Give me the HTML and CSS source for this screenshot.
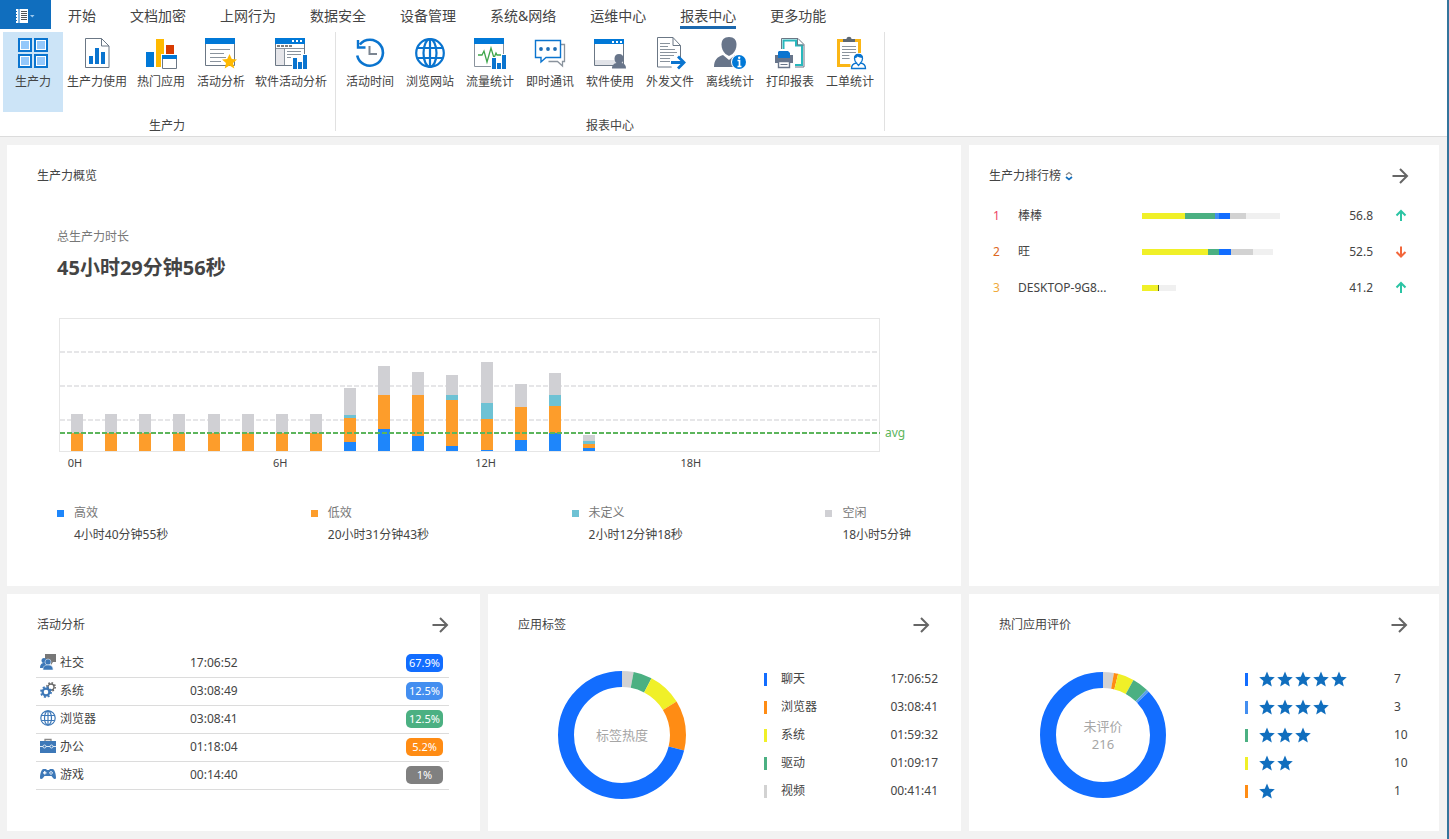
FILE: index.html
```html
<!DOCTYPE html>
<html lang="zh-CN">

<head>
  <meta charset="utf-8">
  <meta name="viewport" content="width=device-width, initial-scale=1">
  <title>报表中心</title>
  <link rel="stylesheet" href="styles.css">
</head>

<body>
  <svg class="sprite" aria-hidden="true">
    <symbol id="i-next" viewBox="0 0 18 18">
      <path d="M1.500 9H16M9 2l7 7-7 7" fill="none" stroke="#666" stroke-width="2" />
    </symbol>
    <symbol id="i-star" viewBox="0 0 16 16">
      <path d="M8 0.500l2.200 5.200 5.600.5-4.300 3.700 1.300 5.600L8 12.600l-4.800 2.900 1.300-5.600L.2 6.200l5.600-.5z" fill="#106ebe" />
    </symbol>
    <symbol id="i-up" viewBox="0 0 16 16">
      <path d="M8 13V3M3.500 7.500 8 3l4.500 4.500" fill="none" stroke="#2bc4a4" stroke-width="2" />
    </symbol>
    <symbol id="i-down" viewBox="0 0 16 16">
      <path d="M8 2.500v10M3.500 8 8 12.500 12.500 8" fill="none" stroke="#f2663b" stroke-width="2" />
    </symbol>
  </svg>

  <header class="ribbon">
    <div class="tab-row">
      <button class="file-button" aria-label="文件">
        <svg width="20" height="14" viewBox="0 0 20 14">
          <path d="M1 0h2.500v14H1zM4.500 0H13v14H4.500z" fill="#fff" />
          <path d="M0 2.500h2M0 5.500h2M0 8.500h2M0 11.500h2" stroke="#106ebe" />
          <path d="M6 2.500h6M6 4.500h6M6 6.500h6M6 8.500h6M6 10.500h6" stroke="#555" />
          <path d="M15 6h4.500l-2.250 2.500z" fill="#9cc8ee" />
        </svg>
      </button>
      <nav class="tabs">
        <a href="#">开始</a>
        <a href="#">文档加密</a>
        <a href="#">上网行为</a>
        <a href="#">数据安全</a>
        <a href="#">设备管理</a>
        <a href="#">系统&amp;网络</a>
        <a href="#">运维中心</a>
        <a href="#" class="active">报表中心</a>
        <a href="#">更多功能</a>
      </nav>
    </div>

    <div class="tool-row">
      <section class="tool-group">
        <div class="tools">
          <button class="tool selected">
            <svg viewBox="0 0 32 32">
              <g fill="#fff" stroke="#0a74cf" stroke-width="2">
                <path d="M2 2h12v12H2zM18 2h12v12H18zM2 18h12v12H2zM18 18h12v12H18z" />
              </g>
              <path d="M4 4h8v8H4zM20 4h8v8h-8zM4 20h8v8H4zM20 20h8v8h-8z" fill="#94c8fb" />
            </svg>
            <span>生产力</span>
          </button>
          <button class="tool">
            <svg viewBox="0 0 32 32">
              <path d="M4.500 1.500h16l7.500 7.500v21.500H4.500z" fill="#fff" stroke="#6b7785" />
              <path d="M20.500 1.500V9H28" fill="none" stroke="#6b7785" />
              <path d="M8 19h4v8H8zM14 11h4v16h-4zM20 15h4v12h-4z" fill="#0a74cf" />
            </svg>
            <span>生产力使用</span>
          </button>
          <button class="tool">
            <svg viewBox="0 0 32 32">
              <path d="M1 15h8v15H1z" fill="#0078d7" />
              <path d="M11 2h8v28h-8z" fill="#ffb900" />
              <path d="M21 8h8v9h-8z" fill="#d83b01" />
              <path d="M16 17h17v16H16z" fill="#fff" />
              <path d="M17.500 18.500h14v13h-14z" fill="#fff" stroke="#6b7785" />
              <path d="M17 18h15v4H17z" fill="#0078d7" />
            </svg>
            <span>热门应用</span>
          </button>
          <button class="tool">
            <svg viewBox="0 0 32 32">
              <path d="M.5 1.500h29v27H.5z" fill="#fff" stroke="#6b7785" />
              <path d="M0 1h30v6H0z" fill="#0078d7" />
              <path d="M5 12.500h20M5 16.500h14M5 20.500h16M5 24.500h11" stroke="#8a939d" />
              <path d="M24.500 17l2.300 5 5.200.5-4 3.600 1.300 5.500-4.800-3-4.800 3 1.300-5.500-4-3.600 5.200-.5z" fill="#ffb900" />
            </svg>
            <span>活动分析</span>
          </button>
          <button class="tool">
            <svg viewBox="0 0 32 32">
              <path d="M.5 1.500h29v27H.5z" fill="#fff" stroke="#6b7785" />
              <path d="M0 1h30v6H0z" fill="#0078d7" />
              <path d="M17 3h2v2h-2zM21 3h2v2h-2zM25 3h2v2h-2z" fill="#fff" />
              <path d="M2 9h16" stroke="#555" stroke-width="1.500" stroke-dasharray="3 1" />
              <path d="M1 12h8v16H1z" fill="#e6e6ea" />
              <path d="M9.500 11v17M1 11.500h28" stroke="#8a939d" />
              <path d="M12 14.500h14M12 17.500h14M12 20.500h4" stroke="#8a939d" />
              <path d="M17 19h6v4h4v-6h6v15H17z" fill="#fff" />
              <path d="M18 21h4v11h-4zM23 25h4v7h-4zM28 18h4v14h-4z" fill="#0a74cf" />
            </svg>
            <span>软件活动分析</span>
          </button>
        </div>
        <h2 class="group-name">生产力</h2>
      </section>

      <section class="tool-group">
        <div class="tools">
          <button class="tool">
            <svg viewBox="0 0 32 32">
              <path d="M5.800 7.500A13 13 0 1 1 3.200 18.500" fill="none" stroke="#0a74cf" stroke-width="2.600" />
              <path d="M4 3v7.500h7.500" fill="none" stroke="#0a74cf" stroke-width="2.400" />
              <path d="M15.500 9v8H23" fill="none" stroke="#7b8591" stroke-width="2" />
            </svg>
            <span>活动时间</span>
          </button>
          <button class="tool">
            <svg viewBox="0 0 32 32">
              <g fill="none" stroke="#0a74cf" stroke-width="2.200">
                <circle cx="16" cy="16" r="13.800" />
                <ellipse cx="16" cy="16" rx="6.500" ry="13.800" />
                <path d="M16 2v28M3.500 11h25M3.500 21h25" />
              </g>
            </svg>
            <span>浏览网站</span>
          </button>
          <button class="tool">
            <svg viewBox="0 0 32 32">
              <path d="M.5 1.500h29v28H.5z" fill="#fff" stroke="#8a939d" />
              <path d="M0 1h30v6H0z" fill="#0078d7" />
              <path d="M4 18h4l2-4 3 11 4-14 3 10 2-5 1 2h4" fill="none" stroke="#3fa64b" stroke-width="1.300" />
              <path d="M17 20h6v5h4v-8h6v15H17z" fill="#fff" />
              <path d="M18 21h4v11h-4zM23 26h4v6h-4zM28 18h4v14h-4z" fill="#0a74cf" />
            </svg>
            <span>流量统计</span>
          </button>
          <button class="tool">
            <svg viewBox="0 0 32 32">
              <path d="M27 7.500h3.500v17h-2v4.500l-5-4.500h-9" fill="none" stroke="#8a939d" stroke-width="1.300" />
              <path d="M1.500 3.500h25v17H12l-5 4.500v-4.500H1.500z" fill="#fff" stroke="#0a74cf" stroke-width="1.400" />
              <g fill="#1d6db5">
                <circle cx="7" cy="12" r="1.900" />
                <circle cx="14" cy="12" r="1.900" />
                <circle cx="21" cy="12" r="1.900" />
              </g>
            </svg>
            <span>即时通讯</span>
          </button>
          <button class="tool">
            <svg viewBox="0 0 32 32">
              <path d="M.5 2.500h29v26H.5z" fill="#fff" stroke="#6b7785" />
              <path d="M1 23h28v5H1z" fill="#e1e3e8" />
              <path d="M0 2h30v5H0z" fill="#0078d7" />
              <path d="M18 4h2v2h-2zM22 4h2v2h-2zM26 4h2v2h-2z" fill="#fff" />
              <path d="M25 17c3 0 4.500 2 4.500 4.500 0 2-.8 3.500-2 4.500 3 .6 4.500 2 4.500 5.500H18c0-3.500 2-4.900 4.500-5.500-1.200-1-2-2.500-2-4.500 0-2.500 1.500-4.500 4.500-4.500z" fill="#68758a" />
            </svg>
            <span>软件使用</span>
          </button>
          <button class="tool">
            <svg viewBox="0 0 32 32">
              <path d="M3.500.5H19l7.500 8v21.500h-23z" fill="#fff" stroke="#6b7785" />
              <path d="M19 .5v8h7.500" fill="none" stroke="#6b7785" />
              <path d="M6 6.500h10M6 9.500h8M6 12.500h15M6 15.500h17M6 18.500h14M6 21.500h11M6 24.500h10" stroke="#8a939d" />
              <path d="M16 21h16v11H18z" fill="#fff" />
              <path d="M17 25.500h12M24 19.500l6 6-6 6" fill="none" stroke="#0a74cf" stroke-width="2.800" />
            </svg>
            <span>外发文件</span>
          </button>
          <button class="tool">
            <svg viewBox="0 0 32 32">
              <path d="M15 0c5 0 7.500 3 7.500 7.500 0 4-1.500 7-4 9.500L15 19l-3.500-2C9 14.500 7.500 11.500 7.500 7.500 7.500 3 10 0 15 0z" fill="#68758a" />
              <path d="M0 30c0-7 3-10 9-12l6 5 6-5c3 1 5 2 6.500 4l-7 8z" fill="#68758a" />
              <circle cx="25" cy="25" r="8" fill="#fff" />
              <circle cx="25" cy="25" r="7" fill="#0078d7" />
              <path d="M23.500 23.500H25.500V29M23.500 29.500h4" fill="none" stroke="#fff" stroke-width="1.700" />
              <circle cx="25.200" cy="20.800" r="1.200" fill="#fff" />
            </svg>
            <span>离线统计</span>
          </button>
          <button class="tool">
            <svg viewBox="0 0 32 32">
              <path d="M7.500 1.500H24l6 6v22.500H7.500z" fill="#fff" stroke="#6b7785" />
              <path d="M9.500 3.500H22v5h6v19.500H9.500z" fill="none" stroke="#28b8bd" stroke-width="2" />
              <path d="M23.500 1.500V8H30" fill="none" stroke="#6b7785" />
              <path d="M0 12h21v20H0z" fill="#fff" />
              <path d="M5 14h9l2 2v5H4v-6z" fill="#0a74cf" />
              <path d="M1 18h3v3h12v-3h3v8H1z" fill="#68758a" />
              <path d="M4.500 24.500h11v6h-11z" fill="#fff" stroke="#68758a" stroke-width="1.400" />
              <path d="M6.500 27.500h7" stroke="#68758a" />
            </svg>
            <span>打印报表</span>
          </button>
          <button class="tool">
            <svg viewBox="0 0 32 32">
              <path d="M4.500 3.500h21v25h-21z" fill="#fff" stroke="#fbb615" stroke-width="3" />
              <path d="M9 5V2h3.500c0-3 5-3 5 0H21v3z" fill="#5e6873" />
              <path d="M8 9.500h14M8 12.500h14M8 15.500h14M8 18.500h11M8 21.500h8" stroke="#8a939d" />
              <path d="M15 16h17v17H17z" fill="#fff" />
              <path d="M24.500 17.500c2.500 0 4 1.500 4 4 0 2-1 3.500-2 4.500 3 .5 5 1.500 5 5.500h-14c0-4 2-5 5-5.500-1-1-2-2.500-2-4.500 0-2.500 1.500-4 4-4zM22.500 26l2 2.500 2-2.500" fill="#fff" stroke="#0a74cf" stroke-width="1.300" />
              <path d="M20.500 21c0-2.500 1.500-4 4-4s4 1.500 4 4c-2 0-4-1-5-1.500-.5 1-1.500 1.500-3 1.500z" fill="#0a74cf" />
            </svg>
            <span>工单统计</span>
          </button>
        </div>
        <h2 class="group-name">报表中心</h2>
      </section>
    </div>
  </header>

  <main class="dashboard">
    <!-- 生产力概览 -->
    <section class="panel overview">
      <div class="panel-head">
        <h3>生产力概览</h3>
      </div>
      <div class="overview-body">
        <p class="total-label">总生产力时长</p>
        <p class="total-value">45小时29分钟56秒</p>

        <div class="chart">
          <div class="plot" id="plot"></div>
          <div class="avg-line"><span>avg</span></div>
        </div>
        <div class="axis">
          <div><span>0H</span></div>
          <div><span>6H</span></div>
          <div><span>12H</span></div>
          <div><span>18H</span></div>
        </div>

        <dl class="legend">
          <div class="legend-item high">
            <dt>高效</dt>
            <dd>4小时40分钟55秒</dd>
          </div>
          <div class="legend-item low">
            <dt>低效</dt>
            <dd>20小时31分钟43秒</dd>
          </div>
          <div class="legend-item undefined">
            <dt>未定义</dt>
            <dd>2小时12分钟18秒</dd>
          </div>
          <div class="legend-item idle">
            <dt>空闲</dt>
            <dd>18小时5分钟</dd>
          </div>
        </dl>
      </div>
    </section>

    <!-- 生产力排行榜 -->
    <section class="panel ranking">
      <div class="panel-head">
        <h3>
          <button class="sort-button">生产力排行榜
            <svg width="8" height="10" viewBox="0 0 8 10">
              <path d="M1 4l3-2.500L7 4" fill="none" stroke="#888" stroke-width="1.200" />
              <path d="M1 6l3 2.500L7 6" fill="none" stroke="#106ebe" stroke-width="1.700" />
            </svg>
          </button>
        </h3>
        <a class="next" href="#" aria-label="查看更多"><svg><use href="#i-next" /></svg></a>
      </div>
      <table class="rank-table">
        <tbody id="rank-body"></tbody>
      </table>
    </section>

    <!-- 活动分析 -->
    <section class="panel">
      <div class="panel-head">
        <h3>活动分析</h3>
        <a class="next" href="#" aria-label="查看更多"><svg><use href="#i-next" /></svg></a>
      </div>
      <table class="activity-table">
        <tbody>
          <tr>
            <td>
              <svg viewBox="0 0 16 16">
                <path d="M5 0h11v8h-3l-2 3V8H5z" fill="#777" />
                <circle cx="4" cy="6.500" r="2.500" fill="#3d78b8" />
                <path d="M0 14c0-4 2-5 4-5s3 1 3 5z" fill="#3d78b8" />
                <circle cx="8" cy="8" r="3" fill="#3d78b8" stroke="#dce8f4" stroke-width=".6" />
                <path d="M3 16c0-4 2-5 5-5s5 1 5 5z" fill="#3d78b8" stroke="#dce8f4" stroke-width=".6" />
              </svg>社交
            </td>
            <td>17:06:52</td>
            <td><span class="badge blue">67.9%</span></td>
          </tr>
          <tr>
            <td>
              <svg viewBox="0 0 16 16">
                <circle cx="11" cy="5" r="3" fill="none" stroke="#666" stroke-width="1.300" />
                <circle cx="11" cy="5" r="4.200" fill="none" stroke="#666" stroke-width="1.500" stroke-dasharray="1.600 1.700" />
                <circle cx="6" cy="10" r="3.400" fill="#fff" stroke="#3d78b8" stroke-width="2.200" />
                <circle cx="6" cy="10" r="5" fill="none" stroke="#3d78b8" stroke-width="1.800" stroke-dasharray="2 1.930" />
              </svg>系统
            </td>
            <td>03:08:49</td>
            <td><span class="badge light">12.5%</span></td>
          </tr>
          <tr>
            <td>
              <svg viewBox="0 0 16 16">
                <g fill="none" stroke="#3d78b8" stroke-width="1.200">
                  <circle cx="8" cy="8" r="7.200" />
                  <ellipse cx="8" cy="8" rx="3.500" ry="7.200" />
                  <path d="M8 1v14M1.500 5.500h13M1.500 10.500h13" />
                </g>
              </svg>浏览器
            </td>
            <td>03:08:41</td>
            <td><span class="badge green">12.5%</span></td>
          </tr>
          <tr>
            <td>
              <svg viewBox="0 0 16 16">
                <path d="M5 3V1.500h6V3" fill="none" stroke="#888" stroke-width="1.300" />
                <path d="M0 3h16v12H0z" fill="#3d78b8" />
                <path d="M0 8.500h3M6 8.500h4M13 8.500h3" stroke="#dfeaf5" />
                <circle cx="4.500" cy="8.500" r="1.500" fill="none" stroke="#dfeaf5" />
                <circle cx="11.500" cy="8.500" r="1.500" fill="none" stroke="#dfeaf5" />
              </svg>办公
            </td>
            <td>01:18:04</td>
            <td><span class="badge orange">5.2%</span></td>
          </tr>
          <tr>
            <td>
              <svg viewBox="0 0 16 16">
                <path d="M3.500 3h2.500l1 1h2l1-1h2.500C14.500 3 16 8 16 11.500c0 2-2 2-3 .5l-1.500-2h-7L3 12c-1 1.500-3 1.500-3-.5C0 8 1.500 3 3.500 3z" fill="#3d78b8" />
                <path d="M3 6.800h3.500M4.750 5v3.500" stroke="#fff" stroke-width="1.200" />
                <path d="M11 5v1.200M11 7.500v1.200M9.200 6.900h1.200M11.700 6.900h1.200" stroke="#fff" stroke-width="1.200" />
              </svg>游戏
            </td>
            <td>00:14:40</td>
            <td><span class="badge gray">1%</span></td>
          </tr>
        </tbody>
      </table>
    </section>

    <!-- 应用标签 -->
    <section class="panel">
      <div class="panel-head">
        <h3>应用标签</h3>
        <a class="next" href="#" aria-label="查看更多"><svg><use href="#i-next" /></svg></a>
      </div>
      <div class="donut-body">
        <svg class="donut" viewBox="0 0 128 128">
          <g class="ring" id="tag-ring"></g>
          <text x="64" y="69">标签热度</text>
        </svg>
        <table class="tag-table">
          <tbody>
            <tr>
              <td><i class="mark blue"></i></td>
              <td>聊天</td>
              <td>17:06:52</td>
            </tr>
            <tr>
              <td><i class="mark orange"></i></td>
              <td>浏览器</td>
              <td>03:08:41</td>
            </tr>
            <tr>
              <td><i class="mark yellow"></i></td>
              <td>系统</td>
              <td>01:59:32</td>
            </tr>
            <tr>
              <td><i class="mark green"></i></td>
              <td>驱动</td>
              <td>01:09:17</td>
            </tr>
            <tr>
              <td><i class="mark silver"></i></td>
              <td>视频</td>
              <td>00:41:41</td>
            </tr>
          </tbody>
        </table>
      </div>
    </section>

    <!-- 热门应用评价 -->
    <section class="panel">
      <div class="panel-head">
        <h3>热门应用评价</h3>
        <a class="next" href="#" aria-label="查看更多"><svg><use href="#i-next" /></svg></a>
      </div>
      <div class="donut-body">
        <svg class="donut" viewBox="0 0 128 128">
          <g class="ring" id="rate-ring"></g>
          <text x="64" y="60">未评价</text>
          <text x="64" y="78">216</text>
        </svg>
        <table class="rate-table">
          <tbody id="rate-body"></tbody>
        </table>
      </div>
    </section>
  </main>

  <script>
    // 每小时柱高: [高效, 低效, 未定义, 空闲]
    const hours = [
      [0, 18, 0, 19], [0, 18, 0, 19], [0, 18, 0, 19], [0, 18, 0, 19],
      [0, 18, 0, 19], [0, 18, 0, 19], [0, 18, 0, 19], [0, 18, 0, 19],
      [9, 24, 3, 27], [22, 34, 0, 29], [15, 41, 0, 23], [5, 46, 5, 20],
      [1, 31, 16, 41], [11, 33, 0, 23], [18, 27, 11, 22], [3, 4, 3, 6],
      [], [], [], [], [], [], [], []
    ];
    const kinds = ["high", "low", "undefined", "idle"];

    document.getElementById("plot").innerHTML = hours.map(values => `
      <div class="slot">
        ${values.map((v, i) => `<div class="bar ${kinds[i]}" style="height: ${v}px"></div>`).reverse().join("")}
      </div>
    `).join("");

    // 排行榜
    const ranks = [
      { name: "棒棒", score: "56.8", trend: "up", parts: [["yellow", 43], ["green", 30], ["light", 4], ["blue", 11], ["silver", 16], ["rest", 34]] },
      { name: "旺", score: "52.5", trend: "down", parts: [["yellow", 66], ["green", 11], ["blue", 12], ["silver", 22], ["rest", 20]] },
      { name: "DESKTOP-9G8...", score: "41.2", trend: "up", parts: [["yellow", 16], ["dark", 1], ["rest", 17]] }
    ];

    document.getElementById("rank-body").innerHTML = ranks.map((r, i) => `
      <tr>
        <td class="rank rank-${i + 1}">${i + 1}</td>
        <td class="name">${r.name}</td>
        <td><div class="meter">${r.parts.map(p => `<i class="${p[0]}" style="width: ${p[1]}px"></i>`).join("")}</div></td>
        <td class="score">${r.score}</td>
        <td class="trend"><svg><use href="#i-${r.trend}" /></svg></td>
      </tr>
    `).join("");

    // 评价星级
    const rates = [[5, "blue", 7], [4, "light", 3], [3, "green", 10], [2, "yellow", 10], [1, "orange", 1]];

    document.getElementById("rate-body").innerHTML = rates.map(r => `
      <tr>
        <td><i class="mark ${r[1]}"></i></td>
        <td><div class="stars">${'<svg><use href="#i-star" /></svg>'.repeat(r[0])}</div></td>
        <td>${r[2]}</td>
      </tr>
    `).join("");

    // 环形图, 每段: [颜色, 结束角度]
    function drawRing(id, radius, parts) {
      let start = 0;
      document.getElementById(id).innerHTML = parts.map(([color, end]) => {
        const arc = `<circle cx="64" cy="64" r="${radius}" pathLength="360" stroke="${color}"
          stroke-dasharray="${end - start} 360" stroke-dashoffset="${-start}" />`;
        start = end;
        return arc;
      }).join("");
    }

    drawRing("tag-ring", 56, [["#d2d2d2", 10.5], ["#4bb082", 27.5], ["#f0f028", 58.5], ["#ff8c14", 104], ["#126dff", 360]]);
    drawRing("rate-ring", 55, [["#d2d2d2", 10], ["#ff8c14", 14], ["#f0f028", 29], ["#4bb082", 44], ["#5aa0e6", 46.5], ["#126dff", 360]]);
  </script>
</body>

</html>
```

FILE: styles.css
```css
* {
  box-sizing: border-box;
}

body {
  display: flex;
  flex-direction: column;
  min-height: 100vh;
  margin: 0;
  border-right: 2px solid #34759c;
  background-color: #f2f2f2;
  color: #444;
  font-family: "Noto Sans", "Noto Sans CJK SC", sans-serif;
  font-size: 12px;
  line-height: 18px;
}

h2,
h3,
p,
dl,
dd {
  margin: 0;
  font-size: 12px;
  font-weight: normal;
}

button {
  padding: 0;
  border: 0;
  background: none;
  color: inherit;
  font: inherit;
}

a {
  color: inherit;
  text-decoration: none;
}

table {
  width: 100%;
  border-collapse: collapse;
  table-layout: fixed;
}

td {
  padding: 0;
}

.sprite {
  display: none;
}

/* 顶部功能区 */
.ribbon {
  border-bottom: 1px solid #dcdcdc;
  background-color: #fff;
}

.tab-row {
  display: flex;
  height: 32px;
}

.file-button {
  display: flex;
  align-items: center;
  justify-content: center;
  width: 51px;
  height: 29px;
  padding: 3px 2px 0 0;
  background-color: #106ebe;
}

.tabs {
  display: flex;
  gap: 34px;
  height: 29px;
  margin-left: 17px;
  font-size: 14px;
  line-height: 20px;
}

.tabs a {
  padding-top: 6px;
  border-bottom: 3px solid transparent;
  white-space: nowrap;
}

.tabs .active {
  border-bottom-color: #1b68ae;
}

.tool-row {
  display: flex;
  padding-bottom: 5px;
}

.tool-group {
  padding: 0 4px;
  border-right: 1px solid #e1e1e1;
}

.tool-group:first-child {
  padding-left: 3px;
}

.tools {
  display: flex;
}

.tool {
  display: flex;
  flex-direction: column;
  align-items: center;
  gap: 4px;
  min-width: 60px;
  height: 80px;
  padding: 5px 4px;
  white-space: nowrap;
}

.tool.selected {
  background-color: #cce4f7;
}

.tool svg {
  width: 32px;
  height: 32px;
  overflow: visible;
}

.group-name {
  margin-top: 4px;
  margin-bottom: -5px;
  line-height: 20px;
  text-align: center;
}

/* 面板 */
.dashboard {
  flex: 1;
  display: grid;
  grid-template-columns: 473fr 473fr 470fr;
  grid-template-rows: 1fr auto;
  gap: 8px;
  padding: 8px 8px 8px 7px;
}

.panel {
  padding: 21px 23px 26px;
  background-color: #fff;
}

.panel-head {
  display: flex;
  align-items: center;
  justify-content: space-between;
  height: 20px;
  padding: 0 8px 0 7px;
}

.next,
.next svg {
  display: block;
  width: 18px;
  height: 18px;
}

/* 生产力概览 */
.overview {
  grid-column: span 2;
}

.overview-body {
  padding: 42px 27px 0;
}

.total-label {
  color: #777;
}

.total-value {
  margin-top: 8px;
  font-size: 20px;
  font-weight: bold;
  line-height: 28px;
}

.chart {
  position: relative;
  margin: 36px 31px 0 2px;
}

.plot {
  display: flex;
  height: 134px;
  border: 1px solid #e6e6e6;
  background:
    repeating-linear-gradient(to right, #fff0 0 5px, #fff 5px 7px),
    repeating-linear-gradient(to bottom, #fff 0 32px, #e6e6e8 32px 34px);
}

.slot {
  flex: 1;
  display: flex;
  flex-direction: column;
  align-items: center;
  justify-content: flex-end;
}

.bar {
  width: 12px;
  background-color: var(--color);
}

.high {
  --color: #1e86fb;
}

.low {
  --color: #fd9d2b;
}

.undefined {
  --color: #6ec2d4;
}

.idle {
  --color: #d0d0d4;
}

.avg-line {
  position: absolute;
  right: 0;
  bottom: 18px;
  left: 1px;
  height: 2px;
  background: repeating-linear-gradient(to right, #5cb55c 0 5px, transparent 5px 7px);
}

.avg-line span {
  position: absolute;
  top: -8px;
  left: 100%;
  margin-left: 5px;
  color: #5cb55c;
}

.axis {
  display: flex;
  margin: 3px 31px 0 2px;
  font-size: 11px;
  line-height: 16px;
}

.axis div {
  flex: 1;
}

.axis span {
  display: block;
  width: 32px;
  text-align: center;
}

.legend {
  display: flex;
  justify-content: space-between;
  margin-top: 31px;
}

.legend-item {
  padding-left: 17px;
  line-height: 22px;
}

.legend-item dt {
  display: flex;
  align-items: center;
  color: #777;
}

.legend-item dt::before {
  content: "";
  width: 7px;
  height: 7px;
  margin: 0 10px 0 -17px;
  background-color: var(--color);
}

/* 排行榜 */
.ranking {
  padding-right: 30px;
  padding-left: 20px;
}

.ranking .panel-head {
  padding: 0;
}

.sort-button {
  display: flex;
  align-items: center;
  gap: 4px;
}

.rank-table {
  margin-top: 12px;
}

.rank-table td {
  height: 36px;
}

.rank-table .rank {
  width: 29px;
  padding-left: 4px;
}

.rank-1 {
  color: #ee4466;
}

.rank-2 {
  color: #dd6622;
}

.rank-3 {
  color: #f0aa3c;
}

.rank-table .name {
  width: 124px;
}

.rank-table .score {
  width: 40px;
  text-align: right;
}

.rank-table .trend {
  width: 36px;
}

.trend svg {
  display: block;
  width: 16px;
  height: 16px;
  margin-left: auto;
}

.meter {
  display: flex;
  height: 6px;
}

.yellow {
  background-color: #f0f028;
}

.green {
  background-color: #4bb082;
}

.light {
  background-color: #438ef0;
}

.blue {
  background-color: #126dff;
}

.orange {
  background-color: #ff8c14;
}

.silver {
  background-color: #d2d2d2;
}

.gray {
  background-color: #808080;
}

.dark {
  background-color: #59652f;
}

.rest {
  background-color: #f0f0f0;
}

/* 活动分析 */
.activity-table {
  width: calc(100% - 14px);
  margin: 14px 8px 0 6px;
}

.activity-table td {
  height: 28px;
  border-bottom: 1px solid #dcdcdc;
}

.activity-table td:first-child {
  width: 154px;
  padding-left: 4px;
}

.activity-table td:last-child {
  padding-right: 6px;
  text-align: right;
}

.activity-table svg {
  width: 16px;
  height: 16px;
  margin-right: 4px;
  vertical-align: -3px;
}

.badge {
  display: inline-block;
  width: 37px;
  border-radius: 5px;
  color: #fff;
  font-size: 11px;
  text-align: center;
  vertical-align: middle;
}

/* 环形图面板 */
.donut-body {
  display: flex;
  align-items: center;
  gap: 78px;
  margin-top: 30px;
  padding-left: 47px;
}

.donut {
  flex: none;
  width: 128px;
  height: 128px;
}

.ring {
  fill: none;
  stroke-width: 16px;
  transform: rotate(-90deg);
  transform-origin: 64px 64px;
}

.donut text {
  fill: #a6a6a6;
  font-size: 13px;
  text-anchor: middle;
}

.donut-body td {
  height: 28px;
}

.donut-body td:first-child {
  width: 17px;
}

.tag-table td:last-child {
  text-align: right;
}

.rate-table td:first-child {
  width: 14px;
}

.rate-table td:last-child {
  width: 22px;
}

.mark {
  display: block;
  width: 3px;
  height: 13px;
}

.stars {
  display: flex;
  gap: 2px;
}

.stars svg {
  width: 16px;
  height: 16px;
}
```
